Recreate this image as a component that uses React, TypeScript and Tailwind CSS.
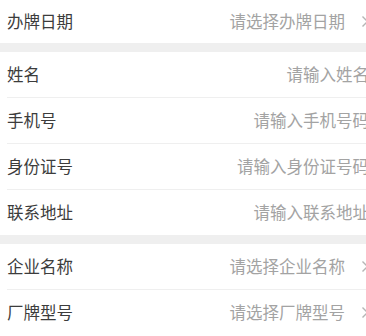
const font = { fontFamily: '"Noto Sans CJK SC", "Noto Sans", sans-serif' }

type Row = { label: string; placeholder: string; select?: boolean }

const sections: Row[][] = [
  [{ label: "办牌日期", placeholder: "请选择办牌日期", select: true }],
  [
    { label: "姓名", placeholder: "请输入姓名" },
    { label: "手机号", placeholder: "请输入手机号码" },
    { label: "身份证号", placeholder: "请输入身份证号码" },
    { label: "联系地址", placeholder: "请输入联系地址" },
  ],
  [
    { label: "企业名称", placeholder: "请选择企业名称", select: true },
    { label: "厂牌型号", placeholder: "请选择厂牌型号", select: true },
  ],
]

function Chevron() {
  return (
    <svg width="8" height="13" viewBox="0 0 8 13" className="ml-[16px] shrink-0">
      <path d="M1.5 1.5 L6.5 6.5 L1.5 11.5" fill="none" stroke="#b5b5b5" strokeWidth="1.4" />
    </svg>
  )
}

function FormRow({ row, last, first }: { row: Row; last: boolean; first: boolean }) {
  return (
    <div className={`pl-[7px] ${first ? "h-[43px]" : ""}`}>
      <div
        className={`flex items-center justify-between pr-[7px] ${first ? "h-[43px]" : "h-[45px]"} ${
          last ? "" : "border-b border-[#efefef]"
        } ${last || first ? "" : "h-[46px]"}`}
      >
        <span className="text-[16.5px] text-[#3c3c3c] whitespace-nowrap">{row.label}</span>
        <div className="flex items-center">
          <span className="text-[16.5px] text-[#a3a3a3] whitespace-nowrap">{row.placeholder}</span>
          {row.select && <Chevron />}
        </div>
      </div>
    </div>
  )
}

export default function App() {
  return (
    <div className="w-[366px] h-[336px] overflow-hidden bg-white" style={font}>
      <div className="w-[376px]">
        {sections.map((rows, si) => (
          <div key={si}>
            {si > 0 && <div className="h-[9px] bg-[#efefef]" />}
            {rows.map((row, ri) => (
              <FormRow key={row.label} row={row} first={si === 0} last={ri === rows.length - 1} />
            ))}
          </div>
        ))}
      </div>
    </div>
  )
}
